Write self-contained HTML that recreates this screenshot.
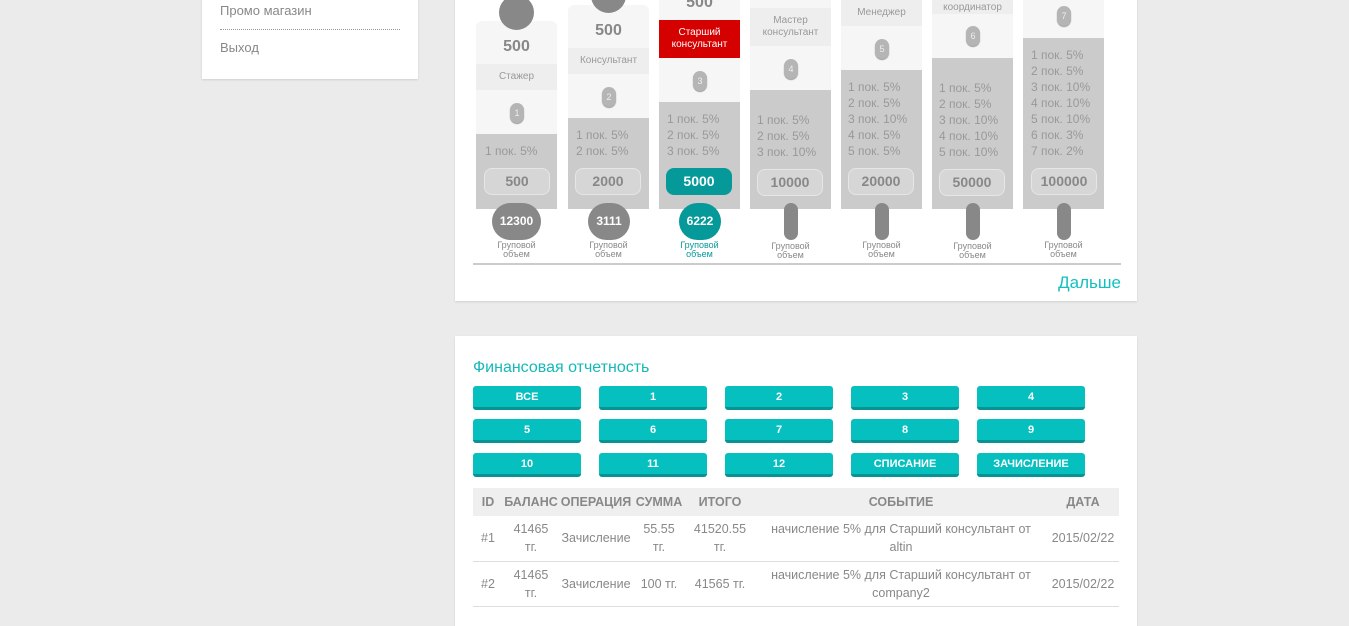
<!DOCTYPE html>
<html><head><meta charset="utf-8">
<style>
*{margin:0;padding:0;box-sizing:border-box}
body{width:1349px;height:616px;overflow:hidden;position:relative;background:#ebebeb;font-family:"Liberation Sans","Noto Sans CJK SC",sans-serif;color:#888}
.a{position:absolute}
.card{background:#fff;box-shadow:0 1px 2px rgba(0,0,0,.12)}
.col{position:absolute;width:81px;background:#f6f6f6;border-radius:6px 6px 0 0;overflow:hidden}
.band{position:absolute;left:0;width:81px;background:#eee;color:#999;font-size:10px;text-align:center;line-height:12px;display:flex;align-items:center;justify-content:center}
.gray{position:absolute;left:0;width:81px;background:#cbcbcb}
.pill{position:absolute;width:14px;height:20px;border-radius:7px;background:#b5b5b5;color:#eee;font-size:9px;text-align:center;line-height:20px;box-shadow:0 1px 1px #999}
.lines{position:absolute;left:9px;font-size:12px;line-height:16px;color:#999}
.btn{position:absolute;width:66px;height:27px;border-radius:8px;border:1px solid #e6e6e6;background:#d6d6d6;color:#888;font-weight:bold;font-size:14px;text-align:center;line-height:25px}
.big{position:absolute;width:81px;text-align:center;font-weight:bold;font-size:16px;color:#888}
.circ{position:absolute;height:37px;border-radius:19px;background:#888;color:#fff;font-weight:bold;font-size:12px;text-align:center;line-height:37px}
.vp{position:absolute;width:14px;height:37px;border-radius:7px;background:#888}
.gv{position:absolute;width:81px;text-align:center;font-size:9px;line-height:9px;color:#888}
.fb{position:absolute;width:108px;height:24px;border-radius:3px;background:#06bfbf;border-bottom:3px solid #079393;color:#fff;font-weight:bold;font-size:11px;text-align:center;line-height:22px}
table{position:absolute;left:473px;top:488px;width:646px;border-collapse:collapse;font-size:12.5px;color:#888}
th{background:#efefef;height:28px;font-size:12.5px;color:#888;font-weight:bold}
td{height:45px;text-align:center;border-bottom:1px solid #ddd;line-height:18px}
</style></head><body>

<div class="a card" style="left:202px;top:-5px;width:216px;height:84px"></div>
<div class="a" style="left:220px;top:3px;font-size:13px;color:#888">Промо магазин</div>
<div class="a" style="left:220px;top:29px;width:180px;border-top:1px dotted #999"></div>
<div class="a" style="left:220px;top:40px;font-size:13px;color:#888">Выход</div>

<div class="a card" style="left:455px;top:-5px;width:682px;height:306px"></div>

<div class="col" style="left:476px;top:21px;height:188px">
 <div class="band" style="top:43px;height:26px">Стажер</div>
 <div class="gray" style="top:113px;height:75px"></div>
</div>
<div class="big" style="left:476px;top:38px">500</div>
<div class="pill" style="left:510px;top:103px">1</div>
<div class="lines" style="left:485px;top:143px">1 пок. 5%</div>
<div class="btn" style="left:484px;top:168px">500</div>
<div class="a" style="left:499px;top:-5px;width:35px;height:35px;border-radius:50%;background:#888"></div>

<div class="col" style="left:568px;top:5px;height:204px">
 <div class="band" style="top:43px;height:26px">Консультант</div>
 <div class="gray" style="top:113px;height:91px"></div>
</div>
<div class="big" style="left:568px;top:22px">500</div>
<div class="pill" style="left:602px;top:87px">2</div>
<div class="lines" style="left:576px;top:127px">1 пок. 5%<br>2 пок. 5%</div>
<div class="btn" style="left:575px;top:168px">2000</div>
<div class="a" style="left:591px;top:-22px;width:35px;height:35px;border-radius:50%;background:#888"></div>

<div class="col" style="left:659px;top:-6px;height:215px;border-radius:0">
 <div class="band" style="top:26px;height:38px;background:#d50000;color:#fff">Старший<br>консультант</div>
 <div class="gray" style="top:108px;height:107px"></div>
</div>
<div class="big" style="left:659px;top:-6px">500</div>
<div class="pill" style="left:693px;top:71px">3</div>
<div class="lines" style="left:667px;top:111px">1 пок. 5%<br>2 пок. 5%<br>3 пок. 5%</div>
<div class="btn" style="left:666px;top:168px;background:#069999;border-color:#069999;color:#fff">5000</div>

<div class="col" style="left:750px;top:-6px;height:215px;border-radius:0">
 <div class="band" style="top:14px;height:38px">Мастер<br>консультант</div>
 <div class="gray" style="top:96px;height:119px"></div>
</div>
<div class="pill" style="left:784px;top:59px">4</div>
<div class="lines" style="left:757px;top:112px">1 пок. 5%<br>2 пок. 5%<br>3 пок. 10%</div>
<div class="btn" style="left:757px;top:169px">10000</div>

<div class="col" style="left:841px;top:-6px;height:215px;border-radius:0">
 <div class="band" style="top:6px;height:26px">Менеджер</div>
 <div class="gray" style="top:76px;height:139px"></div>
</div>
<div class="pill" style="left:875px;top:39px">5</div>
<div class="lines" style="left:848px;top:79px">1 пок. 5%<br>2 пок. 5%<br>3 пок. 10%<br>4 пок. 5%<br>5 пок. 5%</div>
<div class="btn" style="left:848px;top:168px">20000</div>

<div class="col" style="left:932px;top:-6px;height:215px;border-radius:0">
 <div class="band" style="top:0;height:20px;align-items:flex-end">координатор</div>
 <div class="gray" style="top:64px;height:151px"></div>
</div>
<div class="pill" style="left:966px;top:26px">6</div>
<div class="lines" style="left:939px;top:80px">1 пок. 5%<br>2 пок. 5%<br>3 пок. 10%<br>4 пок. 10%<br>5 пок. 10%</div>
<div class="btn" style="left:939px;top:169px">50000</div>

<div class="col" style="left:1023px;top:-6px;height:215px;border-radius:0">
 <div class="gray" style="top:44px;height:171px"></div>
</div>
<div class="pill" style="left:1057px;top:6px">7</div>
<div class="lines" style="left:1031px;top:47px">1 пок. 5%<br>2 пок. 5%<br>3 пок. 10%<br>4 пок. 10%<br>5 пок. 10%<br>6 пок. 3%<br>7 пок. 2%</div>
<div class="btn" style="left:1031px;top:168px">100000</div>

<div class="circ" style="left:492px;top:203px;width:49px">12300</div>
<div class="circ" style="left:588px;top:203px;width:42px">3111</div>
<div class="circ" style="left:679px;top:203px;width:42px;background:#069999">6222</div>
<div class="vp" style="left:784px;top:203px"></div>
<div class="vp" style="left:875px;top:203px"></div>
<div class="vp" style="left:966px;top:203px"></div>
<div class="vp" style="left:1057px;top:203px"></div>
<div class="gv" style="left:476px;top:241px">Груповой<br>объем</div>
<div class="gv" style="left:568px;top:241px">Груповой<br>объем</div>
<div class="gv" style="left:659px;top:241px;color:#069999">Груповой<br>объем</div>
<div class="gv" style="left:750px;top:242px">Груповой<br>объем</div>
<div class="gv" style="left:841px;top:241px">Груповой<br>объем</div>
<div class="gv" style="left:932px;top:242px">Груповой<br>объем</div>
<div class="gv" style="left:1023px;top:241px">Груповой<br>объем</div>

<div class="a" style="left:473px;top:263px;width:648px;height:2px;background:#ccc"></div>
<div class="a" style="left:1050px;top:273px;width:71px;text-align:right;font-size:17px;color:#14bfbf">Дальше</div>

<div class="a card" style="left:455px;top:336px;width:682px;height:290px"></div>
<div class="a" style="left:473px;top:358px;font-size:16px;color:#14b9b9;margin-top:1px">Финансовая отчетность</div>

<div class="fb" style="left:473px;top:386px">ВСЕ</div>
<div class="fb" style="left:599px;top:386px">1</div>
<div class="fb" style="left:725px;top:386px">2</div>
<div class="fb" style="left:851px;top:386px">3</div>
<div class="fb" style="left:977px;top:386px">4</div>
<div class="fb" style="left:473px;top:419px">5</div>
<div class="fb" style="left:599px;top:419px">6</div>
<div class="fb" style="left:725px;top:419px">7</div>
<div class="fb" style="left:851px;top:419px">8</div>
<div class="fb" style="left:977px;top:419px">9</div>
<div class="fb" style="left:473px;top:453px">10</div>
<div class="fb" style="left:599px;top:453px">11</div>
<div class="fb" style="left:725px;top:453px">12</div>
<div class="fb" style="left:851px;top:453px">СПИСАНИЕ</div>
<div class="fb" style="left:977px;top:453px">ЗАЧИСЛЕНИЕ</div>

<table>
<tr><th style="width:30px">ID</th><th style="width:56px">БАЛАНС</th><th style="width:74px">ОПЕРАЦИЯ</th><th style="width:52px">СУММА</th><th style="width:70px">ИТОГО</th><th style="width:292px">СОБЫТИЕ</th><th>ДАТА</th></tr>
<tr><td>#1</td><td>41465<br>тг.</td><td>Зачисление</td><td>55.55<br>тг.</td><td>41520.55<br>тг.</td><td>начисление 5% для Старший консультант от<br>altin</td><td>2015/02/22</td></tr>
<tr><td>#2</td><td>41465<br>тг.</td><td>Зачисление</td><td>100 тг.</td><td>41565 тг.</td><td>начисление 5% для Старший консультант от<br>company2</td><td>2015/02/22</td></tr>
</table>
</body></html>
